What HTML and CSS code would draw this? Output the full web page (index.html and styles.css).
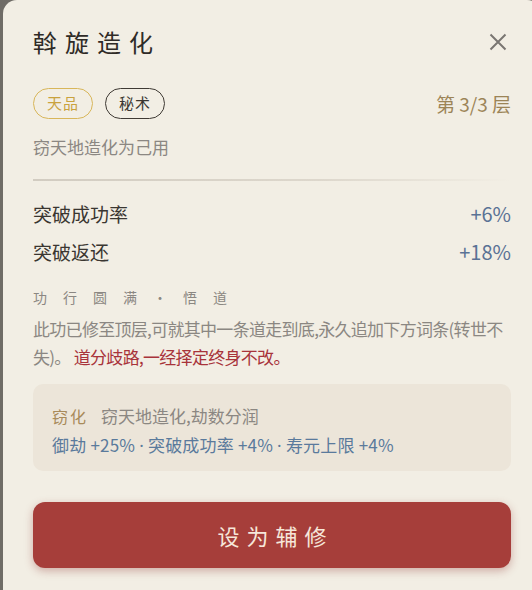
FILE: index.html
```html
<!DOCTYPE html>
<html lang="zh-CN">
<head>
    <meta charset="UTF-8">
    <meta name="viewport" content="width=device-width, initial-scale=1.0">
    <title>斡旋造化</title>
    <link rel="stylesheet" href="styles.css">
</head>
<body>
    <div class="card">
        <div class="head">
            <h1 class="title">斡旋造化</h1>
            <button class="close" type="button" aria-label="关闭">
                <svg width="18" height="18" viewBox="0 0 18 18"><path d="M1.5 1.5 L16.5 16.5 M16.5 1.5 L1.5 16.5" stroke="#7a7672" stroke-width="2" fill="none"/></svg>
            </button>
        </div>

        <div class="meta">
            <div class="tags">
                <span class="tag tag-gold">天品</span>
                <span class="tag tag-dark">秘术</span>
            </div>
            <span class="layer">第 3/3 层</span>
        </div>

        <p class="desc">窃天地造化为己用</p>
        <div class="divider"></div>

        <div class="stats">
            <div class="stat"><span>突破成功率</span><span class="val">+6%</span></div>
            <div class="stat"><span>突破返还</span><span class="val">+18%</span></div>
        </div>

        <div class="section">功行圆满・悟道</div>
        <p class="note">此功已修至顶层,可就其中一条道走到底,永久追加下方词条(转世不失)。 <span class="warn">道分歧路,一经择定终身不改。</span></p>

        <div class="path">
            <div class="path-head"><span class="path-name">窃化</span>窃天地造化,劫数分润</div>
            <div class="path-bonus">御劫 +25% <span class="dot">·</span> 突破成功率 +4% <span class="dot">·</span> 寿元上限 +4%</div>
        </div>

        <button class="action" type="button">设为辅修</button>
    </div>
</body>
</html>
```

FILE: styles.css
```css
html, body {
    margin: 0;
    height: 100%;
}

body {
    background: linear-gradient(90deg, #6f6c66, #8a867e);
    overflow: hidden;
    font-family: "Noto Sans CJK SC", "Noto Sans", sans-serif;
}

.card {
    margin-left: 3px;
    width: 478px;
    height: 590px;
    padding: 26px 30px 0 30px;
    background: #f2eee4;
    border-radius: 14px;
}

.head {
    display: flex;
    justify-content: space-between;
    align-items: center;
    height: 32px;
}

.title {
    margin: 0;
    font-size: 24px;
    font-weight: 400;
    line-height: 32px;
    letter-spacing: 8px;
    color: #2f2b27;
}

.close {
    border: 0;
    background: none;
    padding: 0;
    margin-right: 4px;
    width: 18px;
    height: 18px;
    display: flex;
}

.meta {
    margin-top: 30px;
    display: flex;
    justify-content: space-between;
    align-items: center;
    height: 31px;
}

.tags {
    display: flex;
    gap: 12px;
}

.tag {
    box-sizing: border-box;
    height: 31px;
    padding: 0 13px;
    border-radius: 16px;
    font-size: 15px;
    line-height: 28px;
    letter-spacing: 1px;
    border: 1.5px solid;
}

.tag-gold {
    color: #c9a23e;
    border-color: #d8b65a;
}

.tag-dark {
    color: #3a3631;
    border-color: #3f3a34;
}

.layer {
    font-size: 19px;
    color: #9c8457;
}

.desc {
    margin: 15px 0 0;
    font-size: 17px;
    line-height: 26px;
    color: #8b8782;
}

.divider {
    margin-top: 19px;
    height: 2px;
    background: linear-gradient(90deg, #d2ccc1, #ddd7cc 60%, rgba(242, 238, 228, 0));
}

.stats {
    margin-top: 14px;
}

.stat {
    display: flex;
    justify-content: space-between;
    font-size: 19px;
    line-height: 38px;
    color: #3a3631;
}

.val {
    font-size: 20px;
    color: #5a7295;
}

.section {
    margin-top: 14px;
    font-size: 14px;
    line-height: 24px;
    letter-spacing: 16px;
    color: #8b8782;
}

.note {
    margin: 6px 0 0;
    font-size: 17px;
    line-height: 28px;
    letter-spacing: -0.7px;
    color: #8b8782;
}

.warn {
    color: #a8333a;
}

.path {
    margin-top: 13px;
    padding: 17px 19px 11px;
    background: #ece5d9;
    border-radius: 10px;
}

.path-head {
    font-size: 17px;
    line-height: 30px;
    color: #8b8782;
}

.path-name {
    font-size: 16px;
    letter-spacing: 2px;
    color: #a88a5a;
    margin-right: 13px;
}

.path-bonus {
    font-size: 17px;
    line-height: 28px;
    letter-spacing: 0.2px;
    color: #5a7a9c;
}

.dot {
    font-family: "Noto Sans", sans-serif;
}

.action {
    display: block;
    margin-top: 31px;
    width: 100%;
    height: 66px;
    border: 0;
    border-radius: 12px;
    background: #a63e3a;
    box-shadow: 0 3px 8px rgba(140, 50, 45, 0.35);
    color: #f6e7da;
    font-family: inherit;
    font-size: 22px;
    letter-spacing: 7px;
    text-indent: 7px;
}
```
